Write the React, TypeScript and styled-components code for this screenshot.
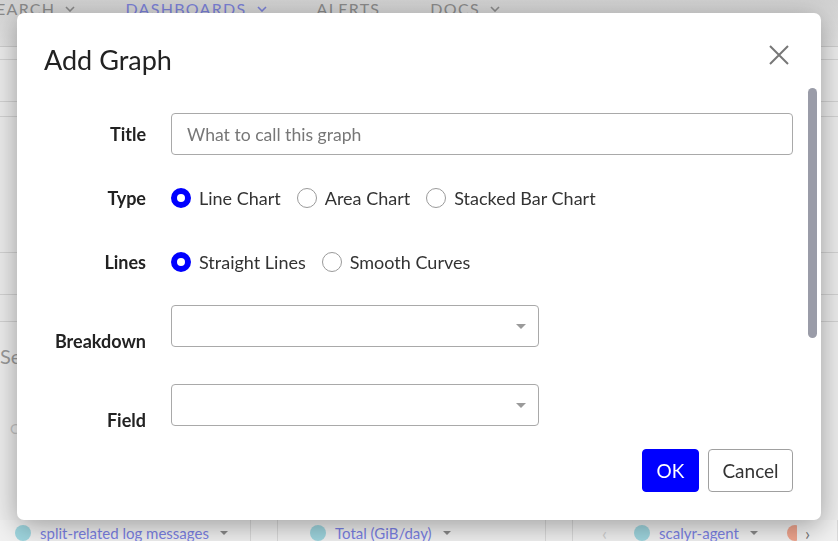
import styled, { createGlobalStyle } from "styled-components";

const GlobalStyle = createGlobalStyle`
  html, body {
    margin: 0;
    padding: 0;
  }
  body {
    font-family: Lato, "Noto Sans", sans-serif;
    background: #ebebeb;
    overflow: hidden;
  }
`;

/* ---------- page behind the dialog ---------- */

const Page = styled.div`
  height: 541px;
  display: flex;
  flex-direction: column;
  overflow: hidden;
`;

const NavBar = styled.div`
  height: 47px;
  flex-shrink: 0;
  box-sizing: border-box;
  display: flex;
  align-items: flex-start;
  gap: 50px;
  margin-left: -14px;
  background: linear-gradient(#d2d2d2, #e2e2e2);
  border-bottom: 1px solid #cdcdcd;
`;

const NavTab = styled.div<{ $active?: boolean }>`
  display: flex;
  align-items: center;
  gap: 10px;
  margin-top: -1px;
  font-size: 16px;
  letter-spacing: 1.3px;
  color: ${(p) => (p.$active ? "#7a80d6" : "#8a8a8a")};
`;

const Band = styled.div<{ $h: number }>`
  height: ${(p) => p.$h}px;
  flex-shrink: 0;
  box-sizing: border-box;
  border-bottom: 1px solid #d2d2d2;
  background: #ececec;
`;

const Filler = styled.div`
  height: 198px;
  flex-shrink: 0;
  display: flex;
  flex-direction: column;
  padding-top: 22px;
  box-sizing: border-box;
  background: #ededed;
`;

const FillerBig = styled.div`
  font-size: 20px;
  color: #9a9a9a;
`;

const FillerSmall = styled.div`
  margin-top: 52px;
  margin-left: 10px;
  font-size: 14px;
  color: #c4c4c4;
`;

const LegendBar = styled.div`
  height: 26px;
  flex-shrink: 0;
  display: flex;
  background: #f1f1f1;
`;

const LegendCell = styled.div<{ $w: number; $pad?: number }>`
  width: ${(p) => p.$w}px;
  flex-shrink: 0;
  box-sizing: border-box;
  padding-left: ${(p) => p.$pad ?? 0}px;
  display: flex;
  align-items: center;
  gap: 9px;
  border-right: 1px solid #dadada;
`;

const LegendDot = styled.span<{ $color: string }>`
  width: 16px;
  height: 16px;
  border-radius: 50%;
  flex-shrink: 0;
  background: ${(p) => p.$color};
`;

const LegendText = styled.span`
  font-size: 15px;
  color: #7b81e4;
`;

const LegendCaret = styled.span`
  margin-left: 2px;
  width: 0;
  height: 0;
  border-left: 4px solid transparent;
  border-right: 4px solid transparent;
  border-top: 4px solid #8a8a8a;
`;

const Pager = styled.span<{ $faint?: boolean }>`
  font-size: 18px;
  color: ${(p) => (p.$faint ? "#d0d0d0" : "#777")};
  margin-right: ${(p) => (p.$faint ? 18 : 0)}px;
`;

const NextButton = styled.span`
  margin-left: -15px;
  height: 26px;
  padding: 0 12px 0 8px;
  display: flex;
  align-items: center;
  background: #f1f1f1;
`;

/* ---------- dialog ---------- */

const Modal = styled.div`
  position: fixed;
  left: 17px;
  top: 13px;
  width: 804px;
  height: 507px;
  box-sizing: border-box;
  background: #fff;
  border-radius: 7px;
  box-shadow: 0 6px 28px rgba(0, 0, 0, 0.35);
  display: flex;
  flex-direction: column;
  overflow: hidden;
`;

const Header = styled.div`
  display: flex;
  justify-content: space-between;
  align-items: flex-start;
  padding: 31px 27px 0;
`;

const Title = styled.h2`
  margin: 0;
  font-size: 27px;
  line-height: 32px;
  font-weight: 400;
  color: #222;
`;

const CloseButton = styled.button`
  width: 24px;
  height: 24px;
  padding: 0;
  margin: -1px 3px 0 0;
  border: none;
  background: none;
  cursor: pointer;
`;

const Body = styled.div`
  display: flex;
  flex-direction: column;
  gap: 22px;
  padding: 37px 28px 0 27px;
`;

const Row = styled.div<{ $top?: boolean }>`
  display: grid;
  grid-template-columns: 102px 1fr;
  column-gap: 25px;
  align-items: ${(p) => (p.$top ? "start" : "center")};
  min-height: ${(p) => (p.$top ? 57 : 42)}px;
`;

const Label = styled.div<{ $low?: boolean }>`
  text-align: right;
  font-size: 18px;
  line-height: 22px;
  font-weight: 700;
  color: #222;
  padding-top: ${(p) => (p.$low ? 25 : 0)}px;
`;

const TextInput = styled.input`
  height: 42px;
  box-sizing: border-box;
  width: 100%;
  padding: 0 15px;
  border: 1px solid #a9a9a9;
  border-radius: 4px;
  font-family: inherit;
  font-size: 17.6px;
  color: #333;
  &::placeholder {
    color: #777;
  }
`;

const RadioGroup = styled.div`
  display: flex;
  align-items: center;
  gap: 16px;
`;

const RadioOption = styled.label`
  display: flex;
  align-items: center;
  gap: 8px;
  font-size: 18px;
  color: #333;
`;

const RadioDot = styled.span<{ $checked?: boolean }>`
  width: 20px;
  height: 20px;
  box-sizing: border-box;
  border-radius: 50%;
  background: #fff;
  border: ${(p) => (p.$checked ? "6px solid #0000ff" : "1px solid #9a9a9a")};
`;

const Select = styled.div`
  width: 368px;
  height: 42px;
  box-sizing: border-box;
  border: 1px solid #a9a9a9;
  border-radius: 4px;
  display: flex;
  align-items: center;
  justify-content: flex-end;
  padding-right: 12px;
`;

const Caret = styled.span`
  width: 0;
  height: 0;
  border-left: 5px solid transparent;
  border-right: 5px solid transparent;
  border-top: 5px solid #9a9a9a;
`;

const Footer = styled.div`
  margin-top: auto;
  display: flex;
  justify-content: flex-end;
  gap: 9px;
  padding: 0 28px 28px;
`;

const Button = styled.button<{ $primary?: boolean }>`
  height: 43px;
  width: ${(p) => (p.$primary ? 57 : 85)}px;
  box-sizing: border-box;
  padding: 0;
  border-radius: 4px;
  font-family: inherit;
  font-size: 19px;
  cursor: pointer;
  background: ${(p) => (p.$primary ? "#0000ff" : "#fff")};
  color: ${(p) => (p.$primary ? "#fff" : "#333")};
  border: 1px solid ${(p) => (p.$primary ? "#0000ff" : "#a0a0a0")};
`;

const ScrollThumb = styled.div`
  position: absolute;
  left: 791px;
  top: 75px;
  width: 9px;
  height: 250px;
  border-radius: 5px;
  background: #9a9ca8;
`;

const Chevron = () => (
  <svg width="10" height="6" viewBox="0 0 10 6">
    <path d="M1 1l4 4 4-4" fill="none" stroke="currentColor" strokeWidth="1.6" />
  </svg>
);

function Radio({ label, checked }: { label: string; checked?: boolean }) {
  return (
    <RadioOption>
      <RadioDot $checked={checked} />
      {label}
    </RadioOption>
  );
}

export default function App() {
  return (
    <>
      <GlobalStyle />
      <Page>
        <NavBar>
          <NavTab>
            SEARCH <Chevron />
          </NavTab>
          <NavTab $active>
            DASHBOARDS <Chevron />
          </NavTab>
          <NavTab>ALERTS</NavTab>
          <NavTab>
            DOCS <Chevron />
          </NavTab>
        </NavBar>
        <Band $h={13} />
        <Band $h={42} />
        <Band $h={15} />
        <Band $h={136} />
        <Band $h={42} />
        <Band $h={27} />
        <Filler>
          <FillerBig>Search</FillerBig>
          <FillerSmall>Count</FillerSmall>
        </Filler>
        <LegendBar>
          <LegendCell $w={251} $pad={15}>
            <LegendDot $color="#9fd6df" />
            <LegendText>split-related log messages</LegendText>
            <LegendCaret />
          </LegendCell>
          <LegendCell $w={27} />
          <LegendCell $w={268} $pad={32}>
            <LegendDot $color="#9fd6df" />
            <LegendText>Total (GiB/day)</LegendText>
            <LegendCaret />
          </LegendCell>
          <LegendCell $w={27} />
          <LegendCell $w={265} $pad={29}>
            <Pager $faint>‹</Pager>
            <LegendDot $color="#9fd6df" />
            <LegendText>scalyr-agent</LegendText>
            <LegendCaret />
            <LegendDot $color="#f0a58e" style={{ marginLeft: 20 }} />
            <NextButton>
              <Pager>›</Pager>
            </NextButton>
          </LegendCell>
        </LegendBar>
      </Page>

      <Modal>
        <Header>
          <Title>Add Graph</Title>
          <CloseButton aria-label="Close">
            <svg width="24" height="24" viewBox="0 0 24 24">
              <path d="M3 3l18 18M21 3L3 21" stroke="#777" strokeWidth="2" />
            </svg>
          </CloseButton>
        </Header>
        <Body>
          <Row>
            <Label>Title</Label>
            <TextInput placeholder="What to call this graph" />
          </Row>
          <Row>
            <Label>Type</Label>
            <RadioGroup>
              <Radio label="Line Chart" checked />
              <Radio label="Area Chart" />
              <Radio label="Stacked Bar Chart" />
            </RadioGroup>
          </Row>
          <Row>
            <Label>Lines</Label>
            <RadioGroup>
              <Radio label="Straight Lines" checked />
              <Radio label="Smooth Curves" />
            </RadioGroup>
          </Row>
          <Row $top>
            <Label $low>Breakdown</Label>
            <Select>
              <Caret />
            </Select>
          </Row>
          <Row $top>
            <Label $low>Field</Label>
            <Select>
              <Caret />
            </Select>
          </Row>
        </Body>
        <Footer>
          <Button $primary>OK</Button>
          <Button>Cancel</Button>
        </Footer>
        <ScrollThumb />
      </Modal>
    </>
  );
}
